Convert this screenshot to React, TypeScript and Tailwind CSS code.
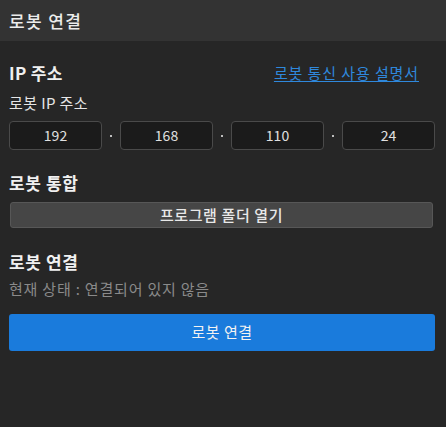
const font = { fontFamily: '"Noto Sans CJK KR", "Noto Sans", sans-serif' };

function IpBox({ value }: { value: string }) {
  return (
    <div className="flex h-[29px] w-[93px] items-center justify-center rounded-[4px] border border-[#4a4a4a] bg-[#1b1b1b] text-[14px] text-[#e0e0e0]">
      {value}
    </div>
  );
}

function Dot() {
  return (
    <div className="flex w-[18px] items-center justify-center">
      <span className="h-[2px] w-[2px] bg-[#bdbdbd]" />
    </div>
  );
}

export default function App() {
  const parts = ["192", "168", "110", "24"];
  return (
    <div className="flex h-[427px] w-[446px] flex-col bg-[#262626]" style={font}>
      <div className="flex h-[41px] items-center bg-[#333333] pl-[9px] text-[17px] font-medium tracking-[1.4px] text-[#ececec]">
        로봇 연결
      </div>

      <div className="flex flex-col pl-[9px] pr-[11px] pt-[22px]">
        <div className="flex items-center justify-between">
          <h2 className="text-[17px] font-bold leading-[20px] tracking-[0.3px] text-[#f0f0f0]">IP 주소</h2>
          <a href="#" className="mr-[16px] text-[15px] leading-[20px] tracking-[0.9px] text-[#2f88dc] underline underline-offset-2">
            로봇 통신 사용 설명서
          </a>
        </div>
        <p className="mt-[11px] text-[15px] leading-[18px] tracking-[0.4px] text-[#e6e6e6]">로봇 IP 주소</p>
        <div className="mt-[9px] flex">
          {parts.map((p, i) => (
            <div key={i} className="flex">
              {i > 0 && <Dot />}
              <IpBox value={p} />
            </div>
          ))}
        </div>

        <h2 className="mt-[23px] text-[17px] font-bold leading-[20px] tracking-[0.6px] text-[#f0f0f0]">로봇 통합</h2>
        <button className="ml-[1px] mr-[2px] mt-[9px] h-[26px] rounded-[3px] border border-[#575757] bg-[#464646] text-[15px] font-medium tracking-[0.6px] text-[#e8e8e8]">
          프로그램 폴더 열기
        </button>

        <h2 className="mt-[24px] text-[17px] font-bold leading-[20px] tracking-[0.6px] text-[#f0f0f0]">로봇 연결</h2>
        <p className="mt-[8px] text-[15px] leading-[18px] tracking-[0.8px] text-[#8a8a8a]">현재 상태 : 연결되어 있지 않음</p>
        <button className="mt-[16px] h-[37px] rounded-[3px] bg-[#1a7bdc] text-[15px] tracking-[0.5px] text-[#f2f2f2]">
          로봇 연결
        </button>
      </div>
    </div>
  );
}
